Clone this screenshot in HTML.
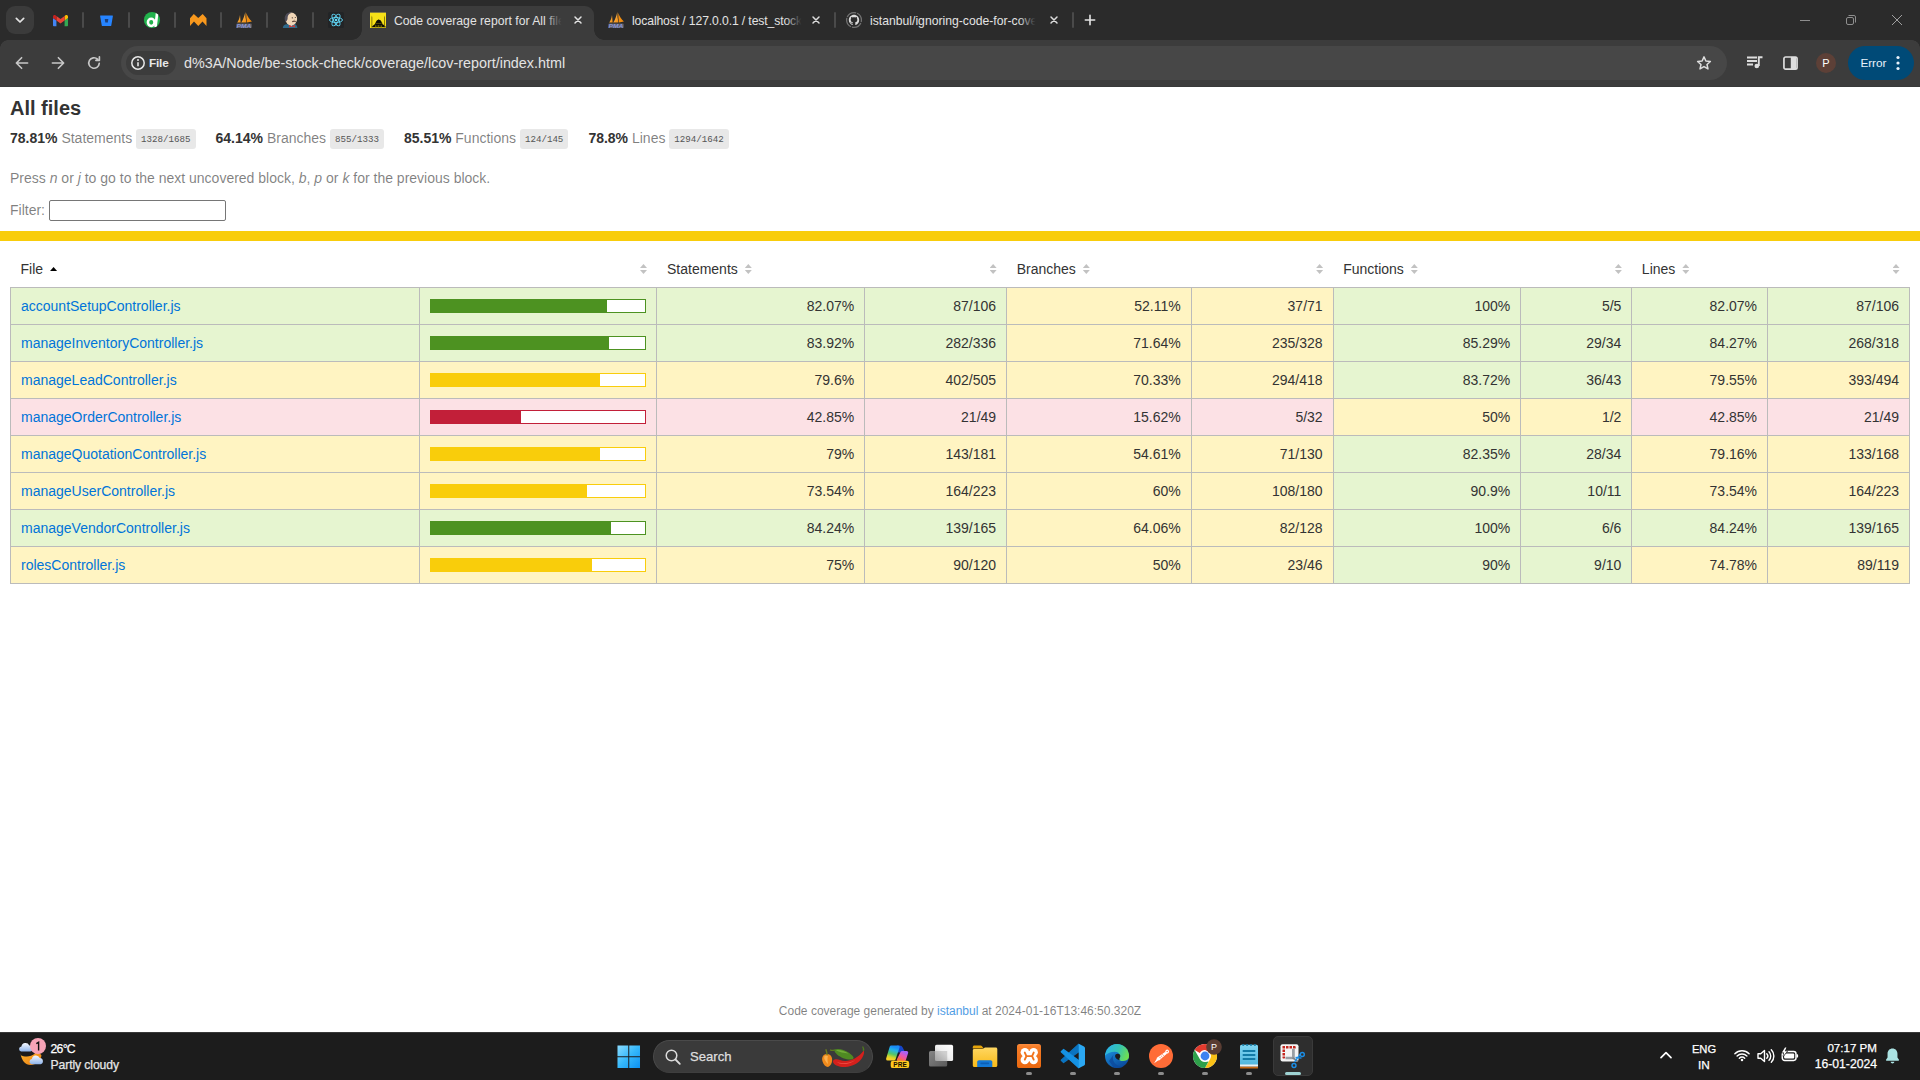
<!DOCTYPE html>
<html lang="en">
<head>
<meta charset="utf-8">
<title>Code coverage report for All files</title>
<style>
html, body { margin:0; padding:0; width:1920px; height:1080px; overflow:hidden; background:#fff; }
body { font-family:"Liberation Sans", sans-serif; font-size:14px; color:#333; position:relative; }
*, *:after, *:before { box-sizing:border-box; }

/* ---------- browser chrome ---------- */
#tabstrip { position:absolute; left:0; top:0; width:1920px; height:40px; background:#2b2b2b; }
#toolbar { position:absolute; left:0; top:40px; width:1920px; height:46px; background:#3c3c3c; }
#toolbar-line { position:absolute; left:0; top:86px; width:1920px; height:1px; background:#383939; }
#omnibox { position:absolute; left:121px; top:6px; width:1606px; height:34px; border-radius:17px; background:#474747; }


#tabstrip .ts-btn { position:absolute; left:6px; top:6px; width:28px; height:28px; border-radius:9px; background:#3b3b3b; }
#tabstrip svg, #toolbar svg, #taskbar svg { position:absolute; display:block; overflow:visible; }
.sep { position:absolute; top:12px; width:2px; height:16px; background:#4a4a4a; border-radius:1px; }
#acttab { position:absolute; left:362px; top:6px; width:232px; height:34px; background:#3c3c3c; border-radius:9px 9px 0 0; }
#acttab:before, #acttab:after { content:''; position:absolute; bottom:0; width:10px; height:10px; }
#acttab:before { left:-10px; background:radial-gradient(circle at 0 0, rgba(60,60,60,0) 9.5px, #3c3c3c 10px); }
#acttab:after { right:-10px; background:radial-gradient(circle at 100% 0, rgba(60,60,60,0) 9.5px, #3c3c3c 10px); }
.ttl { position:absolute; top:13px; height:17px; line-height:16px; font-size:12.2px; color:#e3e3e3; white-space:nowrap; overflow:hidden; }
.ttl i { position:absolute; right:0; top:0; width:18px; height:100%; }
#tb-round-l, #tb-round-r { position:absolute; top:40px; width:8px; height:8px; }
#tb-round-l { left:0; background:radial-gradient(circle at 100% 100%, #3c3c3c 7.5px, #2b2b2b 8px); }
#tb-round-r { right:0; background:radial-gradient(circle at 0 100%, #3c3c3c 7.5px, #2b2b2b 8px); }
#filechip { position:absolute; left:5px; top:5px; width:50px; height:24px; border-radius:12px; background:#3c3c3c; }
#filechip span { position:absolute; left:23px; top:4px; font-size:11.8px; font-weight:bold; color:#e8e8e8; line-height:17px; letter-spacing:-0.2px; }
#url { position:absolute; left:63px; top:7px; font-size:14.35px; line-height:20px; color:#e3e3e3; white-space:nowrap; }
#avatar { position:absolute; left:1816px; top:13px; width:20px; height:20px; border-radius:10px; background:#5d4037; color:#fff; font-size:11px; line-height:20px; text-align:center; }
#errpill { position:absolute; left:1848px; top:6px; width:66px; height:34px; border-radius:17px; background:#004a77; }
#errpill span { position:absolute; left:12.500px; top:9px; font-size:11.800px; line-height:17px; color:#e8f2fb; letter-spacing:-0.1px; }

/* ---------- page ---------- */
#page { position:absolute; left:0; top:87px; width:1920px; height:945px; background:#fff; overflow:hidden; }
h1 { font-size:20px; margin:0; }
a { color:#0074D9; text-decoration:none; }
.strong { font-weight:bold; }
.pad1y { padding:10px 0; }
.pad1 { padding:10px; }
.pad2 { padding:20px; }
.space-right2 { padding-right:20px; }
.center { text-align:center; }
.small { font-size:12px; }
.clearfix { display:block; }
.clearfix:after { content:''; display:block; height:0; clear:both; visibility:hidden; }
.fl { float:left; }
.quiet { color:rgba(0,0,0,0.5); }
.quiet a { opacity:0.7; }
.fraction { font-family:"Liberation Mono", monospace; font-size:9.170px; color:#555; background:#E8E8E8; padding:4.500px 5px; border-radius:3px; vertical-align:middle; }
.coverage-summary { border-collapse:collapse; width:100%; }
.coverage-summary tr { border-bottom:1px solid #bbb; }
.coverage-summary td, .coverage-summary th { padding:10px; }
.coverage-summary tbody { border:1px solid #bbb; }
.coverage-summary td { border-right:1px solid #bbb; }
.coverage-summary td:last-child { border-right:none; }
.coverage-summary th { text-align:left; font-weight:normal; white-space:nowrap; }
.coverage-summary th.pic, .coverage-summary th.abs, .coverage-summary td.pct, .coverage-summary td.abs { text-align:right; }
.coverage-summary td.file { white-space:nowrap; }
.coverage-summary td.pic { min-width:120px !important; }
.sorter { height:10px; width:7px; display:inline-block; margin-left:0.5em; position:relative; }
.sorter:before, .sorter:after { content:''; position:absolute; left:0; width:7px; height:4px; background:#c2c2c2; }
.sorter:before { top:0; clip-path:polygon(50% 0,100% 100%,0 100%); }
.sorter:after { bottom:0; clip-path:polygon(0 0,100% 0,50% 100%); }
.sorted .sorter:before { top:3px; background:#000; }
.sorted .sorter:after { display:none; }
.status-line { height:10px; }
.low .cover-fill { background:#C21F39; }
.low .chart { border:1px solid #C21F39; }
.low { background:#FCE1E5; }
.high { background:rgb(230,245,208); }
.high .cover-fill { background:rgb(77,146,33); }
.high .chart { border:1px solid rgb(77,146,33); }
.status-line.medium, .medium .cover-fill { background:#f9cd0b; }
.medium .chart { border:1px solid #f9cd0b; }
.medium { background:#fff4c2; }
.cover-fill, .cover-empty { display:inline-block; height:12px; }
.chart { line-height:0; }
.cover-empty { background:white; }
.wrapper { min-height:100%; margin:0 auto -48px; }
.footer, .push { height:48px; }
p { margin:14px 0; }
#fileSearch { font-family:"Liberation Sans", sans-serif; font-size:13.33px; width:177px; height:21px; border:1px solid #767676; border-radius:2px; padding:1px 2px; margin:0; background:#fff; outline:none; vertical-align:baseline; }

/* ---------- taskbar ---------- */
#taskbar { position:absolute; left:0; top:1032px; width:1920px; height:48px; background:#1c1c1c; color:#fff; }

#taskbar:before { content:''; position:absolute; left:0; top:0; width:100%; height:1px; background:#383838; }
#taskbar .t { position:absolute; white-space:nowrap; color:#fff; font-size:12px; line-height:16px; -webkit-text-stroke:.250px currentColor; }
#tsearch { position:absolute; left:653px; top:7.500px; width:220px; height:33px; border-radius:17px; background:#3a3a3a; border:1px solid #4a4a4a; border-bottom-color:#3e3e3e; }
.ind { position:absolute; top:40px; width:6px; height:3px; border-radius:1.5px; background:#8c8c8c; }
#acttile { position:absolute; left:1273px; top:4px; width:40px; height:40px; border-radius:5px; background:#2e2e2e; border:1px solid #3a3a3a; }
</style>
</head>
<body>

<div id="tabstrip">
  <div class="ts-btn"><svg style="left:6px;top:6px" width="16" height="16" viewBox="0 0 24 24"><path fill="none" stroke="#e3e3e3" stroke-width="2.6" stroke-linecap="round" stroke-linejoin="round" d="M6.5 9.5L12 15l5.500-5.500"/></svg></div>
  <!-- gmail -->
  <svg style="left:52.500px;top:14.500px" width="15" height="11.250" viewBox="52 42 88 66"><path fill="#4285f4" d="M58 108h14V74L52 59v43c0 3.320 2.690 6 6 6"/><path fill="#34a853" d="M120 108h14c3.320 0 6-2.690 6-6V59l-20 15"/><path fill="#fbbc04" d="M120 48v26l20-15v-8c0-7.420-8.470-11.650-14.400-7.200"/><path fill="#ea4335" d="M72 74V48l24 18 24-18v26L96 92"/><path fill="#c5221f" d="M52 51v8l20 15V48l-5.600-4.200c-5.940-4.450-14.400-.220-14.400 7.200"/></svg>
  <div class="sep" style="left:82px"></div>
  <!-- bitbucket -->
  <svg style="left:99.500px;top:14.800px" width="13" height="11.500" viewBox="0 0 28 24"><path fill="#2684ff" d="M1.200 0.500h25.600c.7 0 1.100.6 1 1.200l-3.500 20.600c-.1.700-.7 1.200-1.400 1.200H5.200c-.7 0-1.300-.5-1.400-1.200L.2 1.700C.1 1.100.5.500 1.200.500z"/><path fill="#1b3f7a" d="M10.200 8.200h7.700l-1.100 7.400h-5.300z"/></svg>
  <div class="sep" style="left:128px"></div>
  <!-- green d -->
  <svg style="left:144px;top:12px" width="16" height="16" viewBox="0 0 16 16"><defs><clipPath id="cd"><circle cx="8" cy="8" r="8.100"/></clipPath></defs><circle cx="8" cy="8" r="8.100" fill="#22b14c"/><g clip-path="url(#cd)"><ellipse cx="7.200" cy="10.300" rx="3.300" ry="3.600" fill="none" stroke="#fff" stroke-width="2.500"/><path stroke="#fff" stroke-width="2.700" d="M13.100 1.200L11.500 15"/></g></svg>
  <div class="sep" style="left:174px"></div>
  <!-- orange M -->
  <svg style="left:189.700px;top:14px" width="16.500" height="12" viewBox="0 0 16.500 12"><path fill="#f8981d" d="M0 4.300L3.800 0l4.450 3.900L12.700 0l3.800 4.300V12L12.500 7.600 8.250 12 4 7.600 0 12z"/></svg>
  <div class="sep" style="left:220px"></div>
  <!-- phpmyadmin -->
  <svg style="left:236px;top:12px" width="16" height="16" viewBox="0 0 16 16"><defs><linearGradient id="g1" x1="0" y1="0" x2="1" y2="1"><stop offset="0" stop-color="#fdc262"/><stop offset="1" stop-color="#f08a0c"/></linearGradient></defs><path fill="url(#g1)" d="M4 2.900C3.600 6 2.600 8.600 1.200 10.600h3.500z"/><path fill="url(#g1)" d="M9.300 0C8.500 4 7 8 5.200 10.600h5.300C9.600 7 9.200 3.500 9.300 0z"/><path fill="#f18d10" d="M10.300 1c1.200 3.500 3.200 6.500 5.600 8.500l-4.900 1.100C10.400 7.200 10.200 4 10.300 1z"/><rect x=".3" y="11.400" width="15.500" height="4.600" rx="1" fill="#c5c9e4" opacity=".3"/><text x=".600" y="15.600" font-family="Liberation Sans, sans-serif" font-size="5.600" font-weight="bold" font-style="italic" fill="#8b96d6" textLength="14.800" lengthAdjust="spacingAndGlyphs">PMA</text></svg>
  <div class="sep" style="left:266px"></div>
  <!-- jenkins -->
  <svg style="left:283px;top:12px" width="15" height="16" viewBox="0 0 15 16"><path fill="#2f6a8b" d="M-.2 16c.2-2 1.300-3.200 3.200-3.700l8.800-.3c1.500.6 2.400 2 2.600 4z"/><ellipse cx="8.200" cy="7" rx="5.900" ry="6.400" fill="#f0d6b7"/><path fill="#4e4c58" d="M2.600 10C.6 6 2 1.500 6.300.5c1-.2 2 0 2.800.3-2.300.4-4 1.800-4.400 3.900-.2 1 .1 1.800-.3 2.800-.3 1-.9 1.800-1.800 2.500z"/><path fill="#e5e5e5" d="M8.300 14.700l-1.600-2 2.600.5z"/><path fill="#d63a32" d="M6.300 12.900l2.700 1.100 2.700-1.100.4 2.700-3.100-1-3.100 1z"/><circle cx="9.300" cy="5.800" r=".650" fill="#3d2f2a"/><circle cx="12.300" cy="5.500" r=".550" fill="#3d2f2a"/><path stroke="#5e4237" stroke-width="1.100" fill="none" d="M9.200 9.800c1.300-.9 2.600-.9 3.600-.2"/><path stroke="#c9a98a" stroke-width=".6" fill="none" d="M11 6.700c.5.600.6 1.300.3 1.900"/></svg>
  <div class="sep" style="left:312px"></div>
  <!-- react -->
  <svg style="left:328px;top:12px" width="16" height="16" viewBox="-8 -8 16 16"><rect x="-8" y="-8" width="16" height="16" rx="1.500" fill="#222426"/><circle r="1.300" fill="#61dafb"/><g fill="none" stroke="#61dafb" stroke-width=".9"><ellipse rx="6.500" ry="2.500"/><ellipse rx="6.500" ry="2.500" transform="rotate(60)"/><ellipse rx="6.500" ry="2.500" transform="rotate(120)"/></g></svg>

  <div id="acttab"></div>
  <!-- istanbul favicon -->
  <svg style="left:370px;top:12px" width="16" height="16" viewBox="0 0 16 16"><rect width="16" height="16" fill="#f7e017"/><rect width="16" height=".6" fill="#3a3a5a"/><path fill="#0e0d05" d="M1.300 15.300l3.300-3h.6v-1.500h.5c.1-1.600 1.300-2.800 2.800-3V7.200h.5v.6c1.500.2 2.700 1.400 2.800 3h.5v1.500h.6l3.300 3z"/><path fill="#5a5100" d="M1.900 3.600l.35 1.800v9.800h-.7V5.400zM14.500 3.600l.35 1.800v9.800h-.7V5.400z"/><path fill="#7d7200" d="M5 13.300h1.500v1.900H5zM7.600 12.900h1.800v2.300H7.600zM10.500 13.300H12v1.900h-1.500zM6 11h5.500v.7H6z" opacity=".75"/></svg>
  <div class="ttl" style="left:394px;width:169px">Code coverage report for All files<i style="background:linear-gradient(90deg,rgba(60,60,60,0),#3c3c3c 92%)"></i></div>
  <svg style="left:572px;top:14px" width="12" height="12" viewBox="0 0 24 24"><path fill="none" stroke="#e3e3e3" stroke-width="3" stroke-linecap="round" d="M6 6l12 12M18 6L6 18"/></svg>

  <!-- tab 2 -->
  <svg style="left:608px;top:12px" width="16" height="16" viewBox="0 0 16 16"><defs><linearGradient id="g2" x1="0" y1="0" x2="1" y2="1"><stop offset="0" stop-color="#fdc262"/><stop offset="1" stop-color="#f08a0c"/></linearGradient></defs><path fill="url(#g2)" d="M4 2.900C3.600 6 2.600 8.600 1.200 10.600h3.500z"/><path fill="url(#g2)" d="M9.300 0C8.500 4 7 8 5.200 10.600h5.300C9.600 7 9.200 3.500 9.300 0z"/><path fill="#f18d10" d="M10.300 1c1.200 3.500 3.200 6.500 5.600 8.500l-4.900 1.100C10.400 7.200 10.200 4 10.300 1z"/><rect x=".3" y="11.400" width="15.500" height="4.600" rx="1" fill="#c5c9e4" opacity=".3"/><text x=".600" y="15.600" font-family="Liberation Sans, sans-serif" font-size="5.600" font-weight="bold" font-style="italic" fill="#8b96d6" textLength="14.800" lengthAdjust="spacingAndGlyphs">PMA</text></svg>
  <div class="ttl" style="left:632px;width:171px;letter-spacing:-.120px">localhost / 127.0.0.1 / test_stock<i style="background:linear-gradient(90deg,rgba(43,43,43,0),#2b2b2b 92%)"></i></div>
  <svg style="left:810px;top:14px" width="12" height="12" viewBox="0 0 24 24"><path fill="none" stroke="#dcdcdc" stroke-width="3" stroke-linecap="round" d="M6 6l12 12M18 6L6 18"/></svg>
  <div class="sep" style="left:834px"></div>

  <!-- tab 3 -->
  <svg style="left:846px;top:12px" width="16" height="16" viewBox="0 0 16 16"><circle cx="8" cy="8" r="7.400" fill="none" stroke="#727272" stroke-width="1.300" stroke-dasharray="10.600 1" stroke-dashoffset="-3"/><path fill="#dadada" transform="translate(2.800 2.800) scale(.65)" d="M8 0C3.580 0 0 3.580 0 8c0 3.540 2.290 6.530 5.470 7.590.4.070.55-.170.550-.380 0-.190-.010-.820-.010-1.490-2.010.370-2.530-.490-2.690-.940-.090-.230-.480-.940-.820-1.130-.280-.150-.680-.520-.010-.530.630-.010 1.080.580 1.230.820.720 1.210 1.870.870 2.330.660.070-.520.280-.870.510-1.070-1.780-.200-3.640-.890-3.640-3.950 0-.870.310-1.590.820-2.150-.080-.200-.360-1.020.080-2.120 0 0 .670-.210 2.200.820.640-.180 1.320-.270 2-.270.680 0 1.360.090 2 .270 1.530-1.040 2.200-.820 2.200-.820.440 1.100.160 1.920.080 2.120.510.560.820 1.270.820 2.150 0 3.070-1.870 3.750-3.650 3.950.290.250.540.730.540 1.480 0 1.070-.010 1.930-.010 2.200 0 .210.150.460.550.380A8.013 8.013 0 0016 8c0-4.420-3.580-8-8-8z"/></svg>
  <div class="ttl" style="left:870px;width:167px">istanbul/ignoring-code-for-coverage<i style="background:linear-gradient(90deg,rgba(43,43,43,0),#2b2b2b 92%)"></i></div>
  <svg style="left:1048px;top:14px" width="12" height="12" viewBox="0 0 24 24"><path fill="none" stroke="#dcdcdc" stroke-width="3" stroke-linecap="round" d="M6 6l12 12M18 6L6 18"/></svg>
  <div class="sep" style="left:1072px"></div>
  <svg style="left:1083px;top:13px" width="14" height="14" viewBox="0 0 24 24"><path fill="none" stroke="#e3e3e3" stroke-width="2.800" stroke-linecap="round" d="M12 4v16M4 12h16"/></svg>

  <!-- window controls -->
  <svg style="left:1800px;top:15px" width="10" height="10" viewBox="0 0 10 10"><path stroke="#8e8e8e" stroke-width="1" d="M0 5.500h10"/></svg>
  <svg style="left:1846px;top:15px" width="10" height="10" viewBox="0 0 10 10"><rect x=".5" y="2.500" width="7" height="7" rx="1.500" fill="none" stroke="#8e8e8e"/><path fill="none" stroke="#8e8e8e" d="M2.500 .5h5.500a1.500 1.500 0 011.500 1.500v5.500"/></svg>
  <svg style="left:1892px;top:15px" width="10" height="10" viewBox="0 0 10 10"><path stroke="#a0a0a0" stroke-width="1" d="M0 0l10 10M10 0L0 10"/></svg>
</div>
<div id="toolbar">
  <svg style="left:13px;top:14px" width="18" height="18" viewBox="0 0 24 24"><path fill="none" stroke="#c7c7c7" stroke-width="2.200" stroke-linecap="round" stroke-linejoin="round" d="M19.500 12H5M11.500 5L4.500 12l7 7"/></svg>
  <svg style="left:49px;top:14px" width="18" height="18" viewBox="0 0 24 24"><path fill="none" stroke="#c7c7c7" stroke-width="2.200" stroke-linecap="round" stroke-linejoin="round" d="M4.500 12H19M12.500 5l7 7-7 7"/></svg>
  <svg style="left:85px;top:14px" width="18" height="18" viewBox="0 0 24 24"><path fill="none" stroke="#c7c7c7" stroke-width="2.200" stroke-linecap="round" stroke-linejoin="round" d="M19 12.500a7 7 0 11-2.300-5.700M19.200 3.800v4.700h-4.700"/></svg>
  <div id="omnibox">
    <div id="filechip"><svg style="left:4px;top:4px" width="16" height="16" viewBox="0 0 16 16"><circle cx="8" cy="8" r="6.200" fill="none" stroke="#e8e8e8" stroke-width="1.500"/><path stroke="#e8e8e8" stroke-width="1.600" d="M8 7.200v4"/><circle cx="8" cy="5" r="1" fill="#e8e8e8"/></svg><span>File</span></div>
    <div id="url">d%3A/Node/be-stock-check/coverage/lcov-report/index.html</div>
    <svg style="left:1574px;top:8px" width="18" height="18" viewBox="0 0 24 24"><path fill="none" stroke="#dedede" stroke-width="2" stroke-linejoin="round" d="M12 3.800l2.500 5.500 6 .700-4.500 4 1.300 5.900-5.300-3.100-5.300 3.100 1.300-5.900-4.500-4 6-.700z"/></svg>
  </div>
  <!-- media -->
  <svg style="left:1746px;top:15px" width="17" height="14" viewBox="0 0 17 14"><path stroke="#dedede" stroke-width="1.900" d="M1 2.500h10M1 6h10M1 9.500h6"/><path stroke="#dedede" stroke-width="1.900" fill="none" d="M12.800 11V2.200h3.700"/><circle cx="10.800" cy="11" r="2.300" fill="#dedede"/></svg>
  <!-- side panel -->
  <svg style="left:1782.500px;top:15.800px" width="15" height="14.200" viewBox="0 0 16 15"><rect x="1" y="1" width="14" height="13" rx="1.800" fill="none" stroke="#dedede" stroke-width="1.800"/><path fill="#dedede" d="M8.300 1H14v13H8.300z"/></svg>
  <div id="avatar">P</div>
  <div id="errpill"><span>Error</span><svg style="left:47px;top:8px" width="6" height="18" viewBox="0 0 6 18"><circle cx="3" cy="3.500" r="1.600" fill="#e8f2fb"/><circle cx="3" cy="9" r="1.600" fill="#e8f2fb"/><circle cx="3" cy="14.500" r="1.600" fill="#e8f2fb"/></svg></div>
</div>
<div id="tb-round-l"></div><div id="tb-round-r"></div>
<div id="toolbar-line"></div>

<div id="page">
<div class="wrapper">
  <div class="pad1">
    <h1>All files</h1>
    <div class="clearfix">
      <div class="fl pad1y space-right2"><span class="strong">78.81% </span><span class="quiet">Statements</span> <span class="fraction">1328/1685</span></div>
      <div class="fl pad1y space-right2"><span class="strong">64.14% </span><span class="quiet">Branches</span> <span class="fraction">855/1333</span></div>
      <div class="fl pad1y space-right2"><span class="strong">85.51% </span><span class="quiet">Functions</span> <span class="fraction">124/145</span></div>
      <div class="fl pad1y space-right2"><span class="strong">78.8% </span><span class="quiet">Lines</span> <span class="fraction">1294/1642</span></div>
    </div>
    <p class="quiet">Press <em>n</em> or <em>j</em> to go to the next uncovered block, <em>b</em>, <em>p</em> or <em>k</em> for the previous block.</p>
    <div class="quiet">Filter: <input type="text" id="fileSearch"></div>
  </div>
  <div class="status-line medium"></div>
  <div class="pad1">
  <table class="coverage-summary">
  <thead>
  <tr>
    <th class="file sorted">File<span class="sorter"></span></th>
    <th class="pic"><span class="sorter"></span></th>
    <th class="pct">Statements<span class="sorter"></span></th>
    <th class="abs"><span class="sorter"></span></th>
    <th class="pct">Branches<span class="sorter"></span></th>
    <th class="abs"><span class="sorter"></span></th>
    <th class="pct">Functions<span class="sorter"></span></th>
    <th class="abs"><span class="sorter"></span></th>
    <th class="pct">Lines<span class="sorter"></span></th>
    <th class="abs"><span class="sorter"></span></th>
  </tr>
  </thead>
  <tbody>
  <tr>
    <td class="file high"><a>accountSetupController.js</a></td>
    <td class="pic high"><div class="chart"><div class="cover-fill" style="width:82%"></div><div class="cover-empty" style="width:18%"></div></div></td>
    <td class="pct high">82.07%</td><td class="abs high">87/106</td>
    <td class="pct medium">52.11%</td><td class="abs medium">37/71</td>
    <td class="pct high">100%</td><td class="abs high">5/5</td>
    <td class="pct high">82.07%</td><td class="abs high">87/106</td>
  </tr>
  <tr>
    <td class="file high"><a>manageInventoryController.js</a></td>
    <td class="pic high"><div class="chart"><div class="cover-fill" style="width:83%"></div><div class="cover-empty" style="width:17%"></div></div></td>
    <td class="pct high">83.92%</td><td class="abs high">282/336</td>
    <td class="pct medium">71.64%</td><td class="abs medium">235/328</td>
    <td class="pct high">85.29%</td><td class="abs high">29/34</td>
    <td class="pct high">84.27%</td><td class="abs high">268/318</td>
  </tr>
  <tr>
    <td class="file medium"><a>manageLeadController.js</a></td>
    <td class="pic medium"><div class="chart"><div class="cover-fill" style="width:79%"></div><div class="cover-empty" style="width:21%"></div></div></td>
    <td class="pct medium">79.6%</td><td class="abs medium">402/505</td>
    <td class="pct medium">70.33%</td><td class="abs medium">294/418</td>
    <td class="pct high">83.72%</td><td class="abs high">36/43</td>
    <td class="pct medium">79.55%</td><td class="abs medium">393/494</td>
  </tr>
  <tr>
    <td class="file low"><a>manageOrderController.js</a></td>
    <td class="pic low"><div class="chart"><div class="cover-fill" style="width:42%"></div><div class="cover-empty" style="width:58%"></div></div></td>
    <td class="pct low">42.85%</td><td class="abs low">21/49</td>
    <td class="pct low">15.62%</td><td class="abs low">5/32</td>
    <td class="pct medium">50%</td><td class="abs medium">1/2</td>
    <td class="pct low">42.85%</td><td class="abs low">21/49</td>
  </tr>
  <tr>
    <td class="file medium"><a>manageQuotationController.js</a></td>
    <td class="pic medium"><div class="chart"><div class="cover-fill" style="width:79%"></div><div class="cover-empty" style="width:21%"></div></div></td>
    <td class="pct medium">79%</td><td class="abs medium">143/181</td>
    <td class="pct medium">54.61%</td><td class="abs medium">71/130</td>
    <td class="pct high">82.35%</td><td class="abs high">28/34</td>
    <td class="pct medium">79.16%</td><td class="abs medium">133/168</td>
  </tr>
  <tr>
    <td class="file medium"><a>manageUserController.js</a></td>
    <td class="pic medium"><div class="chart"><div class="cover-fill" style="width:73%"></div><div class="cover-empty" style="width:27%"></div></div></td>
    <td class="pct medium">73.54%</td><td class="abs medium">164/223</td>
    <td class="pct medium">60%</td><td class="abs medium">108/180</td>
    <td class="pct high">90.9%</td><td class="abs high">10/11</td>
    <td class="pct medium">73.54%</td><td class="abs medium">164/223</td>
  </tr>
  <tr>
    <td class="file high"><a>manageVendorController.js</a></td>
    <td class="pic high"><div class="chart"><div class="cover-fill" style="width:84%"></div><div class="cover-empty" style="width:16%"></div></div></td>
    <td class="pct high">84.24%</td><td class="abs high">139/165</td>
    <td class="pct medium">64.06%</td><td class="abs medium">82/128</td>
    <td class="pct high">100%</td><td class="abs high">6/6</td>
    <td class="pct high">84.24%</td><td class="abs high">139/165</td>
  </tr>
  <tr>
    <td class="file medium"><a>rolesController.js</a></td>
    <td class="pic medium"><div class="chart"><div class="cover-fill" style="width:75%"></div><div class="cover-empty" style="width:25%"></div></div></td>
    <td class="pct medium">75%</td><td class="abs medium">90/120</td>
    <td class="pct medium">50%</td><td class="abs medium">23/46</td>
    <td class="pct high">90%</td><td class="abs high">9/10</td>
    <td class="pct medium">74.78%</td><td class="abs medium">89/119</td>
  </tr>
  </tbody>
  </table>
  </div>
  <div class="push"></div>
</div>
<div class="footer quiet pad2 center small">Code coverage generated by <a>istanbul</a> at 2024-01-16T13:46:50.320Z</div>
</div>

<div id="taskbar">
  <!-- weather -->
  <svg style="left:17px;top:9px" width="28" height="26" viewBox="0 0 28 26">
    <defs><linearGradient id="cl" x1="0" y1="0" x2="0" y2="1"><stop offset="0" stop-color="#f4f8ff"/><stop offset="1" stop-color="#8fb4ea"/></linearGradient><linearGradient id="mo" x1="0" y1="0" x2="1" y2="1"><stop offset="0" stop-color="#ffb62e"/><stop offset="1" stop-color="#e87a10"/></linearGradient></defs>
    <path fill="url(#mo)" d="M3.500 12.500c3.500 2 9 1.500 12.500-1.500 4-1 7 .5 8.500 3.500-1 5.500-5.500 9.500-11 9.500-5 0-9-4.500-10-11.500z"/>
    <path fill="#1c1c1c" d="M3 11.500c4 2.200 9.500 1.800 13.500-1.500l1.500 2.500c-4 3.500-10 4-14.500 1.500z"/>
    <path fill="url(#cl)" d="M4 10.500a2.600 2.600 0 01.400-5.100A4.200 4.200 0 0112.300 4.500a3 3 0 01.700 6z"/>
    <path fill="url(#cl)" transform="translate(-1 -.4) scale(1.070)" d="M14.500 22a2.500 2.500 0 01.300-4.900 3.900 3.900 0 017.400-.8 2.900 2.900 0 01.800 5.700z"/>
  </svg>
  <svg style="left:30px;top:6px" width="16" height="16" viewBox="0 0 16 16"><circle cx="8" cy="8" r="8" fill="#f7a3b6"/><path stroke="#111" stroke-width="1.400" fill="none" d="M6.300 5.600l2.300-1.300v8.200"/></svg>
  <div class="t" style="left:50.500px;top:9px;font-size:12.200px;letter-spacing:-.700px">26°C</div>
  <div class="t" style="left:50.500px;top:25px;font-size:12.200px;letter-spacing:-.100px;color:#e6e6e6">Partly cloudy</div>

  <!-- start -->
  <svg style="left:617px;top:12.700px" width="23.500" height="23.500" viewBox="0 0 24 24"><defs><linearGradient id="wg" x1="0" y1="0" x2="1" y2="1"><stop offset="0" stop-color="#8bdcff"/><stop offset=".5" stop-color="#35b8fb"/><stop offset="1" stop-color="#0c8ff0"/></linearGradient></defs><path fill="url(#wg)" d="M.5.500h11v11H.5zM12.500.500h11v11h-11zM.5 12.500h11v11H.5zM12.500 12.500h11v11h-11z"/></svg>

  <!-- search -->
  <div id="tsearch">
    <svg style="left:10px;top:7px" width="18" height="18" viewBox="0 0 18 18"><circle cx="7.500" cy="7.500" r="5.300" fill="none" stroke="#dcdcdc" stroke-width="1.500"/><path stroke="#dcdcdc" stroke-width="1.800" stroke-linecap="round" d="M11.500 11.500l4.300 4.300"/></svg>
    <div class="t" style="left:36px;top:7px;font-size:13.100px;line-height:18px;color:#dedede">Search</div>
    <!-- chilies -->
    <svg style="left:166px;top:5px" width="50.500" height="24" viewBox="0 0 48 24" preserveAspectRatio="none">
      <path fill="#f08a1c" d="M3.200 9.500c1.500-1.800 4.500-2 6.500-.5 1.800 1.500 2.300 4.500 1.500 7.500-.8 2.500-2.300 4.300-3.800 4.500-2 0-4-2.500-5-5.500-.7-2.500-.5-4.500.8-6z"/><path fill="#ffc266" d="M4 10.500c1-1 2.500-1.200 3.500-.6-.5 2-.5 5 .2 8-1.500-1-3-3.300-3.700-5.400z" opacity=".7"/><path stroke="#6b7a1e" stroke-width="1.300" fill="none" d="M6.800 9.200c-.2-2-.5-4-1.300-6"/>
      <path fill="#4f8a22" d="M13.500 3.500c4-1.500 9.500 0 14 3.300 2.500 1.800 4.300 3.800 4.500 5.200-.5 1.500-3 2-6.500 1.200-4.500-1-9-3.700-11-6.700-.8-1.200-1.300-2.400-1-3z"/><path fill="#8bc34a" d="M15 4.200c3.500-.8 8 .5 12 3.300-4 -.5-8.500-1.500-12-3.300z" opacity=".6"/><path stroke="#5d7a1e" stroke-width="1.300" fill="none" d="M13.800 4.200c-1.500.3-3 .2-4.300-.4"/>
      <path fill="#d4201c" d="M12.500 14.500c1.500-1.800 4-1.500 6.500-.5 4 1.500 9 1.200 14-1.500 3.500-2 6.500-5 8.500-8 .8 1.300.5 4-1.500 7.500-3 5-9 8.500-16 9-5.500.3-10-1.500-11.500-4.500-.4-.8-.4-1.500 0-2z"/><path fill="#ff6b5e" d="M15 15.500c4.500 2.500 12 2.500 18.500-1.500-5 4.500-13.500 5.500-18.500 1.500z" opacity=".7"/><path stroke="#4f7a1e" stroke-width="1.300" fill="none" d="M41.300 4.800c.3-1.500 0-3-.8-4.300"/>
    </svg>
  </div>

  <!-- copilot -->
  <svg style="left:885px;top:12px" width="25" height="25" viewBox="0 0 25 25">
    <defs><linearGradient id="cp1" x1=".6" y1="0" x2=".35" y2="1"><stop offset="0" stop-color="#1a8cf7"/><stop offset=".25" stop-color="#23b4e8"/><stop offset=".6" stop-color="#52c46a"/><stop offset=".85" stop-color="#c8d62e"/><stop offset="1" stop-color="#f5cf28"/></linearGradient><linearGradient id="cp2" x1=".8" y1="0" x2=".25" y2="1"><stop offset="0" stop-color="#a763f7"/><stop offset=".45" stop-color="#e455b6"/><stop offset=".8" stop-color="#f65c7c"/><stop offset="1" stop-color="#f6703f"/></linearGradient></defs>
    <path fill="#1646c9" stroke="#1646c9" stroke-width="2" stroke-linejoin="round" d="M12.500 2.400h2.200c1 0 1.700.5 2.100 1.400l1.700 3.700h-5z"/>
    <path fill="url(#cp1)" stroke="url(#cp1)" stroke-width="3" stroke-linejoin="round" d="M6.200 2.900h7l-4 12H2.600z"/>
    <path fill="url(#cp2)" stroke="url(#cp2)" stroke-width="3" stroke-linejoin="round" d="M17 8.500h4.700l-2.300 7.200h-6z"/>
    <rect x="5.700" y="16.800" width="18.500" height="7.300" rx="2.200" fill="#ffc81e"/>
    <text x="8.300" y="22.900" font-family="Liberation Sans, sans-serif" font-size="6.500" font-weight="bold" fill="#161000" textLength="13.500" lengthAdjust="spacing">PRE</text>
  </svg>

  <!-- task view -->
  <svg style="left:929px;top:12px" width="25" height="23" viewBox="0 0 25 23"><defs><linearGradient id="tv1" x1="0" y1="0" x2="1" y2="1"><stop offset="0" stop-color="#858585"/><stop offset="1" stop-color="#5a5a5a"/></linearGradient><linearGradient id="tv2" x1="1" y1="0" x2="0" y2="1"><stop offset="0" stop-color="#ffffff"/><stop offset=".5" stop-color="#f0f0f0"/><stop offset="1" stop-color="#b4b4b4"/></linearGradient></defs><rect x="0" y="7" width="18.200" height="15.600" rx="1.600" fill="url(#tv1)"/><rect x="6" y=".8" width="18.100" height="16.200" rx="1.600" fill="url(#tv2)"/><path d="M6 7h12.200v10H7.600A1.600 1.600 0 016 15.400z" fill="#777" opacity=".28"/></svg>

  <!-- explorer -->
  <svg style="left:972px;top:12.600px" width="26" height="23" viewBox="0 0 26 23"><defs><linearGradient id="fo" x1="0" y1="0" x2="0" y2="1"><stop offset="0" stop-color="#ffd762"/><stop offset="1" stop-color="#f8ba18"/></linearGradient></defs><path fill="#e5a40a" d="M.8 2.200c0-.9.700-1.600 1.600-1.600h6.200c.5 0 .9.200 1.200.5l2 2.300H.8z"/><path fill="url(#fo)" d="M.8 5.200c0-.7.600-1.300 1.300-1.300h8.300c.4 0 .8-.1 1.100-.4l1-.8c.3-.2.600-.3 1-.3h10.300c.8 0 1.500.7 1.500 1.500v16.600c0 .8-.7 1.500-1.500 1.500H2.300c-.8 0-1.500-.7-1.500-1.500z"/><path fill="#1479d6" d="M5.200 22v-5c0-1 .8-1.800 1.800-1.800h11.500c1 0 1.800.8 1.800 1.800v5z"/><rect x="8.300" y="17.600" width="8.800" height="1.600" rx=".8" fill="#0c5fb5"/></svg>

  <!-- xampp -->
  <svg style="left:1017px;top:12px" width="24" height="24" viewBox="0 0 24 24"><defs><linearGradient id="xa" x1="0" y1="0" x2="0" y2="1"><stop offset="0" stop-color="#fb8d3f"/><stop offset=".12" stop-color="#f77d28"/><stop offset="1" stop-color="#ea680f"/></linearGradient></defs><rect width="24" height="24" rx="2.600" fill="url(#xa)"/><g fill="#fff"><circle cx="7.900" cy="8.300" r="4.300"/><circle cx="16.600" cy="8.300" r="4.300"/><circle cx="7.900" cy="15.900" r="4.300"/><circle cx="16.600" cy="15.900" r="4.300"/><rect x="6.500" y="7" width="11.500" height="10" /></g><path fill="none" stroke="#f2741c" stroke-width="1.900" stroke-linecap="round" stroke-linejoin="round" d="M7.800 8.600l1.600 3.500-1.600 3.500M16.700 8.600l-1.600 3.500 1.600 3.500M9.400 12.100h5.700"/></svg>
  <div class="ind" style="left:1026px"></div>

  <!-- vscode -->
  <svg style="left:1060px;top:12px" width="25" height="24" viewBox="0 0 25 24"><path fill="#0b74c0" stroke="#0b74c0" stroke-width="1.200" stroke-linejoin="round" d="M18.700 .3v7.500L3.600 18.600 1.200 16.300z"/><path fill="#1592e4" stroke="#1592e4" stroke-width="1.200" stroke-linejoin="round" d="M18.700 23.700v-7.300L3.600 5.400 1.200 7.700z"/><path fill="#2ba8f3" d="M18.700 -.2l5.300 2.600c.6.300 1 .9 1 1.600v16c0 .7-.4 1.300-1 1.600l-5.300 2.600z"/></svg>
  <div class="ind" style="left:1070px"></div>

  <!-- edge -->
  <svg style="left:1105px;top:12px" width="24" height="24" viewBox="0 0 24 24"><defs><linearGradient id="ed1" x1="0" y1=".2" x2="1" y2=".5"><stop offset="0" stop-color="#2ab2ee"/><stop offset=".55" stop-color="#35c4b0"/><stop offset="1" stop-color="#72e04c"/></linearGradient><linearGradient id="ed2" x1="0" y1="0" x2=".6" y2="1"><stop offset="0" stop-color="#1fa0ea"/><stop offset="1" stop-color="#0b4c9f"/></linearGradient><clipPath id="edc"><circle cx="12" cy="12" r="12"/></clipPath></defs><g clip-path="url(#edc)"><rect width="24" height="24" fill="url(#ed2)"/><path fill="url(#ed1)" d="M0 10.500C1.500 4.500 6.300 -1 12.200 -1 19.700 -1 25 4.700 25 10.500c0 4-3 6.500-7 6.500-2.500 0-4.200-1-4.200-2.600 0-.9.900-1.300.9-2.800 0-2.300-2-3.800-5-3.800-4.200 0-8 2-9.700 4z"/><path fill="#0d4a9c" d="M9.800 9c-1.800 1.900-2.500 4.600-1.500 7.400 1.300 3.600 4.800 5.900 8.800 5.900 2 0 4-.7 5.600-1.900l1.300 2.600-6 2-9-1-5-7z" opacity=".8"/><path fill="#1c1c1c" d="M10.800 10.300c1-.9 3-.9 4 .2.800 1 .7 2.400-.2 3.800-.3.500-.4 1.100 0 1.600-1.700-.2-3.300-1-4.100-2.400-.6-1.100-.5-2.400.3-3.200z"/></g></svg>
  <div class="ind" style="left:1114px"></div>

  <!-- postman -->
  <svg style="left:1149px;top:12px" width="24" height="24" viewBox="0 0 24 24"><circle cx="12" cy="12" r="12" fill="#ff6c37"/><path fill="#fff" d="M16.800 6.200a1.900 1.900 0 112.700 2.700 1.900 1.900 0 01-2.700-2.700zM16 8l1.800 1.800-7.300 6.500-1.400.2-4 2.700 2.500-4.200.3-1.300z"/><path stroke="#ff6c37" stroke-width=".7" d="M13.300 10.200l1.700 1.700M11.800 11.500l1.700 1.700M10.300 12.800l1.700 1.700"/><circle cx="18.200" cy="7.500" r=".7" fill="#ff6c37"/></svg>
  <div class="ind" style="left:1158px"></div>

  <!-- chrome -->
  <svg style="left:1193px;top:12px" width="24" height="24" viewBox="0 0 24 24"><circle cx="12" cy="12" r="12" fill="#fff"/><path fill="#e33b2e" d="M12 0a12 12 0 0110.400 6H12a6 6 0 00-5.200 3L1.600 6A12 12 0 0112 0z"/><path fill="#fbc116" d="M22.400 6A12 12 0 0112 24l5.200-9a6 6 0 000-6l.1-3z"/><path fill="#2ea04a" d="M1.600 6l5.200 9a6 6 0 005.200 3l3.500-.5L12 24A12 12 0 011.600 6z"/><path fill="#e33b2e" d="M12 6h10.400l-5.200 3z" /><circle cx="12" cy="12" r="5.500" fill="#fff"/><circle cx="12" cy="12" r="4.400" fill="#3b82f1"/></svg>
  <svg style="left:1206px;top:7px" width="16" height="16" viewBox="0 0 16 16"><circle cx="8" cy="8" r="7.800" fill="#5a3d33"/><text x="8" y="11.300" text-anchor="middle" font-family="Liberation Sans, sans-serif" font-size="9" fill="#fff">P</text></svg>
  <div class="ind" style="left:1202px"></div>

  <!-- notepad -->
  <svg style="left:1239px;top:11px" width="20" height="26" viewBox="0 0 20 26"><defs><linearGradient id="np" x1="0" y1="0" x2="0" y2="1"><stop offset="0" stop-color="#80d6f2"/><stop offset="1" stop-color="#4fb4dc"/></linearGradient></defs><rect x="1" y="1.800" width="18" height="21.500" rx="1.500" fill="url(#np)"/><g fill="#1a7ca6"><circle cx="4.200" cy="2" r="1.100"/><circle cx="8.100" cy="2" r="1.100"/><circle cx="12" cy="2" r="1.100"/><circle cx="15.900" cy="2" r="1.100"/></g><path fill="#137ba6" d="M3.700 7h12.600v2H3.700zM3.700 11h12.600v2H3.700zM3.700 15h12.600v2H3.700z"/><path fill="#eef2f4" d="M1 21.500h18v2.200H1z"/><path fill="#c76a15" d="M1 23.700h18V25c0 .3-.3.600-.6.600H1.600c-.3 0-.6-.3-.6-.6z"/></svg>
  <div class="ind" style="left:1246px"></div>

  <!-- snipping tool -->
  <div id="acttile"></div>
  <svg style="left:1280px;top:12px" width="26" height="25" viewBox="0 0 26 25"><rect x=".5" y=".3" width="18" height="17.200" rx="2" fill="#f4f4f4"/><path fill="#c3271f" d="M2.500 2h2.500v2.500H2.500zM6 2h2.500v2.500H6zM9.500 2h2.500v2.500H9.500zM13 2h1.500c.8 0 1.200.5 1.200 1.200V4.500H13zM2.500 5.500h2.500V8H2.500zM2.500 9h2.500v2.500H2.500zM2.500 12.500h2.500V14c0 .3-.2.500-.5.500H3.500c-.6 0-1-.4-1-1z"/><path fill="#9aa0a6" d="M12 4.800h2.800v10.500H5.500v-2.600h6.500z"/><path fill="#7d848a" d="M13 13l5.500 3.700-.8 1.200L12 14.500z"/><path stroke="#1b8fe8" stroke-width="1.300" fill="none" d="M14.500 18l6-8M15.500 13.500l6 .5"/><circle cx="22.300" cy="10.500" r="2" fill="none" stroke="#1b8fe8" stroke-width="1.400"/><circle cx="14" cy="21.500" r="2" fill="none" stroke="#1b8fe8" stroke-width="1.400"/></svg>
  <div class="ind" style="left:1285px;width:16px;background:#9fd3d3"></div>

  <!-- tray -->
  <svg style="left:1660px;top:18px" width="12" height="10" viewBox="0 0 12 10"><path fill="none" stroke="#fff" stroke-width="1.700" stroke-linecap="round" stroke-linejoin="round" d="M1 7.700l5-5 5 5"/></svg>
  <div class="t" style="left:1684px;top:9px;width:40px;text-align:center;font-size:11.200px">ENG</div>
  <div class="t" style="left:1684px;top:25px;width:40px;text-align:center;font-size:11.800px">IN</div>
  <svg style="left:1734px;top:16.800px" width="16" height="12.500" viewBox="0 0 18 14"><g fill="none" stroke="#fff" stroke-width="1.650" stroke-linecap="round"><path d="M1 5.200a11.300 11.300 0 0116 0"/><path d="M3.500 7.800a7.800 7.800 0 0111 0"/><path d="M6 10.300a4.300 4.300 0 016 0"/></g><circle cx="9" cy="12.300" r="1.400" fill="#fff"/></svg>
  <svg style="left:1757px;top:16px" width="18" height="16" viewBox="0 0 18 16"><path fill="none" stroke="#fff" stroke-width="1.400" stroke-linejoin="round" d="M1 5.800h2.700L7.500 2.500v11L3.700 10.200H1z"/><g fill="none" stroke="#fff" stroke-width="1.400" stroke-linecap="round"><path d="M9.800 5.700a3.300 3.300 0 010 4.600"/><path d="M12 3.700a6.200 6.200 0 010 8.600"/><path d="M14.300 1.700a9 9 0 010 12.600"/></g></svg>
  <svg style="left:1781px;top:16px" width="18" height="14" viewBox="0 0 18 14"><rect x="1.300" y="3.600" width="13.700" height="8.800" rx="2.300" fill="none" stroke="#fff" stroke-width="1.500"/><rect x="3.100" y="5.400" width="10.100" height="5.200" rx="1" fill="#fff"/><path fill="#fff" d="M15.600 6.200h.8c.4 0 .7.300.7.700v2c0 .4-.3.700-.7.700h-.8z"/><path fill="#fff" stroke="#1c1c1c" stroke-width="1.100" paint-order="stroke" d="M4 -.5L.9 4.600h2.200L2.100 8.300l4-5.100H3.800L5.400 -.5z"/></svg>
  <div class="t" style="left:1790px;top:8px;width:87px;text-align:right;font-size:11.600px">07:17 PM</div>
  <div class="t" style="left:1790px;top:24px;width:87px;text-align:right;font-size:12.200px">16-01-2024</div>
  <svg style="left:1884.500px;top:16.300px" width="15" height="16.500" viewBox="0 0 14 16"><path fill="#abe3e3" d="M7 .5c2.800 0 4.800 2.200 4.800 5v3.700l1.500 2.300c.2.400 0 .8-.5.800H1.200c-.5 0-.7-.4-.5-.8l1.500-2.300V5.500C2.200 2.700 4.200.5 7 .5zM5.200 13.300h3.600c-.2 1-.9 1.700-1.800 1.700s-1.600-.7-1.800-1.700z"/></svg>
</div>

</body>
</html>
